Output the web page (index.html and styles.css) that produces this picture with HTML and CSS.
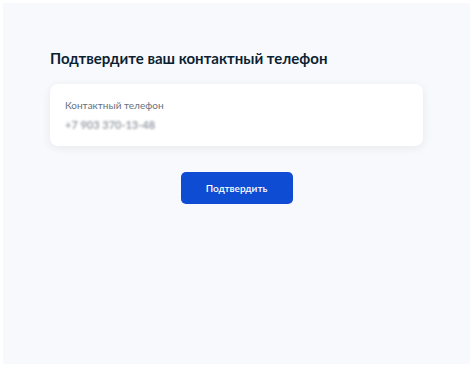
FILE: index.html
```html
<!DOCTYPE html>
<html lang="ru">
<head>
    <meta charset="UTF-8">
    <meta name="viewport" content="width=device-width, initial-scale=1.0">
    <title>Подтверждение телефона</title>
    <link rel="stylesheet" href="styles.css">
</head>
<body>
    <div class="page">
        <div class="content">
            <h1 class="title">Подтвердите ваш контактный телефон</h1>
            <div class="card">
                <div class="label">Контактный телефон</div>
                <div class="phone">+7 903 370-13-48</div>
            </div>
            <div class="actions">
                <button class="btn">Подтвердить</button>
            </div>
        </div>
    </div>
</body>
</html>
```

FILE: styles.css
```css
* {
    margin: 0;
    padding: 0;
    box-sizing: border-box;
    font-family: Lato, "Noto Sans", sans-serif;
}

html, body {
    height: 100%;
}

body {
    background: #fff;
    padding: 3px 4px 4px 3px;
}

.page {
    background: #f8f9fc;
    height: 100%;
    padding: 44px 47px 0 47px;
}

.content {
    width: 373px;
}

.title {
    font-size: 15px;
    font-weight: 700;
    color: #0b1f33;
    line-height: 22px;
}

.card {
    background: #fff;
    margin-top: 15px;
    border-radius: 8px;
    box-shadow: 0 2px 10px rgba(11, 31, 51, 0.07);
    padding: 14px 15px 0;
    height: 62px;
}

.label {
    font-size: 10px;
    color: #66727f;
    line-height: 14px;
}

.phone {
    font-size: 11px;
    font-weight: 700;
    color: #9aa1a9;
    line-height: 14px;
    margin-top: 6px;
    filter: blur(0.9px);
}

.actions {
    display: flex;
    justify-content: center;
    margin-top: 26px;
}

.btn {
    background: #0d4cd3;
    color: #fff;
    border: 0;
    border-radius: 5px;
    width: 112px;
    height: 32px;
    font-size: 10px;
    font-weight: 600;
    cursor: pointer;
}
```
